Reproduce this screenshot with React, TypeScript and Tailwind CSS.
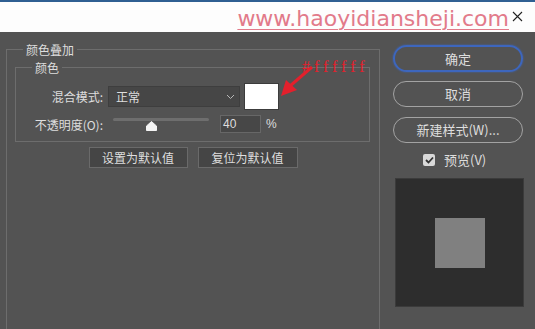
import React from "react";

const cjk = { fontFamily: '"Noto Sans CJK SC", "Noto Sans", sans-serif' };

export default function App() {
  return (
    <div
      className="relative w-[535px] h-[329px] overflow-hidden bg-[#535353] text-[#dedede]"
      style={cjk}
    >
      {/* title bar */}
      <div className="h-[32px] bg-[#fdfdfd] border-t-2 border-[#2f5f92] flex items-center justify-end pr-[12px] pt-[3px]">
        <span
          className="text-[22px] leading-[26px] text-[#e27a8a] underline decoration-1 underline-offset-[3px]"
          style={{ fontFamily: '"DejaVu Sans", sans-serif' }}
        >
          www.haoyidiansheji.com
        </span>
        <svg width="11" height="11" viewBox="0 0 11 11" className="ml-[3px] mb-[4px]">
          <path d="M1 1 L10 10 M10 1 L1 10" stroke="#222" strokeWidth="1.1" fill="none" />
        </svg>
      </div>

      <div className="flex">
        {/* left panel */}
        <fieldset className="ml-[6px] mt-[9px] w-[374px] h-[320px] border border-[#6d6d6d]">
          <legend className="ml-[16px] px-[3px] text-[12px] leading-[17px]">颜色叠加</legend>

          <fieldset className="ml-[8px] mr-[9px] mt-[1px] border border-[#6d6d6d] pb-[8px]">
            <legend className="ml-[16px] px-[3px] text-[12px] leading-[17px]">颜色</legend>

            {/* blend mode row */}
            <div className="mt-[7px] h-[27px] flex items-center">
              <div className="w-[87px] text-right text-[12px] leading-[17px]">混合模式:</div>
              <div className="ml-[5px] w-[132px] h-[21px] bg-[#464646] border border-[#3e3e3e] flex items-center justify-between pl-[7px] pr-[4px]">
                <span className="text-[12px] leading-[17px]">正常</span>
                <svg width="9" height="6" viewBox="0 0 9 6">
                  <path d="M1 1 L4.5 4.5 L8 1" stroke="#b8b8b8" strokeWidth="1" fill="none" />
                </svg>
              </div>
              <div className="ml-[4px] w-[35px] h-[27px] bg-white border border-[#3c3c3c]" />
            </div>

            {/* opacity row */}
            <div className="mt-[5px] h-[18px] flex items-center">
              <div className="w-[87px] text-right text-[12px] leading-[17px]">不透明度(O):</div>
              <div className="ml-[10px] w-[96px] h-[18px] relative">
                <div className="absolute left-0 right-0 top-[3px] h-[3px] rounded-full bg-[#6e6e6e]" />
                <svg
                  width="11"
                  height="10"
                  viewBox="0 0 11 10"
                  className="absolute left-[33px] top-[6px]"
                >
                  <path d="M5.5 0.5 L10.5 5 L10.5 9.5 L0.5 9.5 L0.5 5 Z" fill="#f4f4f4" stroke="#f4f4f4" strokeLinejoin="round" />
                </svg>
              </div>
              <div className="ml-[11px] w-[41px] h-[18px] bg-[#474747] border border-[#676767] flex items-center pl-[2px]">
                <span className="text-[12px] leading-[16px]" style={{ fontFamily: '"Liberation Sans", sans-serif' }}>40</span>
              </div>
              <span className="ml-[5px] text-[12px]" style={{ fontFamily: '"Liberation Sans", sans-serif' }}>%</span>
            </div>
          </fieldset>

          <div className="mt-[5px] flex justify-center gap-[10px]">
            <div className="w-[99px] h-[21px] bg-[#454545] border border-[#6a6a6a] flex items-center justify-center text-[12px] leading-[17px]">
              设置为默认值
            </div>
            <div className="w-[100px] h-[21px] bg-[#454545] border border-[#6a6a6a] flex items-center justify-center text-[12px] leading-[17px]">
              复位为默认值
            </div>
          </div>
        </fieldset>

        {/* right column */}
        <div className="ml-[13px] mt-[13px] w-[130px] flex flex-col">
          <div className="h-[27px] rounded-full border-2 border-[#3d66bd] flex items-center justify-center text-[13px] leading-[18px] shadow-[0_0_2px_#3d66bd]">
            确定
          </div>
          <div className="mt-[9px] h-[26px] rounded-full border border-[#a3a3a3] flex items-center justify-center text-[13px] leading-[18px]">
            取消
          </div>
          <div className="mt-[10px] h-[26px] rounded-full border border-[#a3a3a3] flex items-center justify-center text-[13px] leading-[18px]">
            新建样式(W)...
          </div>
          <div className="mt-[9px] h-[16px] flex items-center pl-[30px]">
            <div className="w-[12px] h-[12px] rounded-[2px] bg-[#d9d9d9] flex items-center justify-center">
              <svg width="9" height="8" viewBox="0 0 9 8">
                <path d="M1 4 L3.5 6.5 L8 1.5" stroke="#333" strokeWidth="1.8" fill="none" />
              </svg>
            </div>
            <span className="ml-[9px] text-[13px] leading-[18px]">预览(V)</span>
          </div>
          <div className="mt-[10px] ml-[2px] w-[129px] h-[129px] bg-[#2d2d2d] border border-[#3b3b3b] flex items-center justify-center">
            <div className="w-[50px] h-[50px] bg-[#808080]" />
          </div>
        </div>
      </div>

      {/* red annotation overlay */}
      <span
        className="absolute left-[302px] top-[57px] text-[16px] leading-[20px] tracking-[4px] text-[#e3202c]"
        style={{ fontFamily: '"Liberation Serif", serif' }}
      >
        #ffffff
      </span>
      <svg width="40" height="40" viewBox="0 0 40 40" className="absolute left-[278px] top-[62px]">
        <path d="M34 5 L12 24" stroke="#e3202c" strokeWidth="3" fill="none" />
        <path d="M3 34 L8 18 L19 28 Z" fill="#e3202c" />
      </svg>
    </div>
  );
}
